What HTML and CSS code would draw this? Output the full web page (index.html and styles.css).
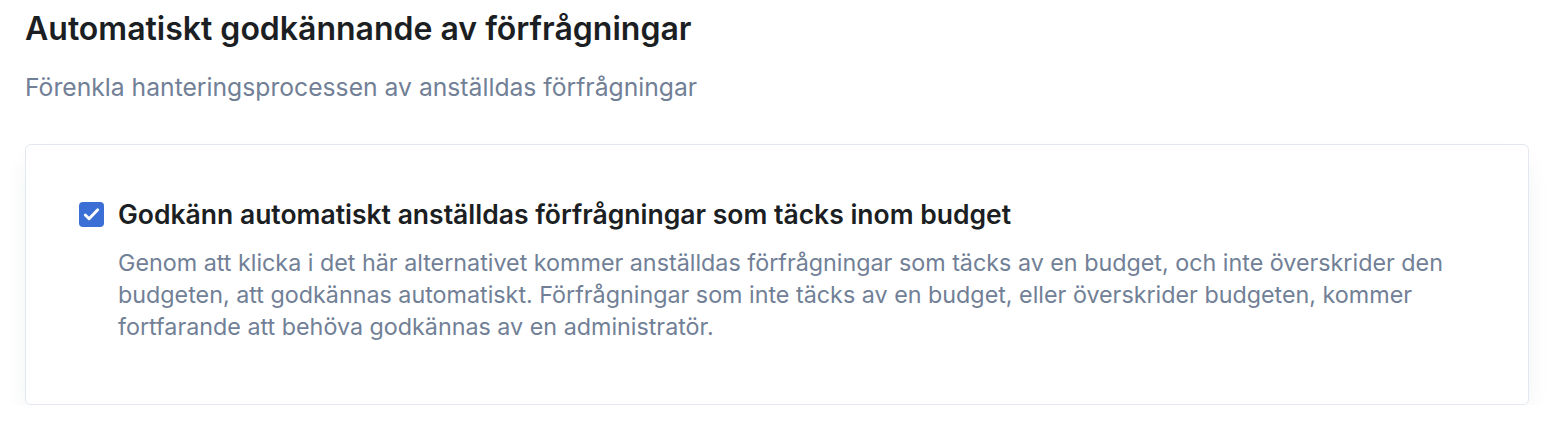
FILE: index.html
```html
<!DOCTYPE html>
<html lang="sv">
  <head>
    <meta charset="UTF-8" />
    <meta name="viewport" content="width=device-width, initial-scale=1.0" />
    <title>Automatiskt godkännande</title>
    <link rel="stylesheet" href="styles.css">
  </head>
  <body>
    <section class="settings">
      <h2 class="settings-title">Automatiskt godkännande av förfrågningar</h2>
      <p class="settings-subtitle">Förenkla hanteringsprocessen av anställdas förfrågningar</p>
      <div class="card">
        <label class="option">
          <span class="checkbox">
            <svg viewBox="0 0 24 24" width="23" height="23">
              <path d="M5.5 12.5l4 4 9-9.5" fill="none" stroke="#fff" stroke-width="3" stroke-linecap="round" stroke-linejoin="round" />
            </svg>
          </span>
          <span class="option-label">Godkänn automatiskt anställdas förfrågningar som täcks inom budget</span>
        </label>
        <p class="option-help">
          Genom att klicka i det här alternativet kommer anställdas förfrågningar som täcks av en budget, och inte överskrider den
          budgeten, att godkännas automatiskt. Förfrågningar som inte täcks av en budget, eller överskrider budgeten, kommer
          fortfarande att behöva godkännas av en administratör.
        </p>
      </div>
    </section>
  </body>
</html>
```

FILE: styles.css
```css
* {
  box-sizing: border-box;
  margin: 0;
  padding: 0;
}

body {
  font-family: Inter, "Noto Sans", sans-serif;
  background-color: #fff;
  color: #1a1d21;
}

.settings {
  padding: 9px 27px 0 25px;
}

.settings-title {
  font-size: 32px;
  font-weight: 600;
  line-height: 40px;
  color: #1b1e22;
}

.settings-subtitle {
  margin-top: 22px;
  font-size: 24.7px;
  line-height: 32px;
  color: #718096;
}

.card {
  margin-top: 41px;
  border: 1px solid #e3e8ee;
  border-radius: 6px;
  padding: 53px 53px 61px;
  box-shadow: 0 14px 26px -6px rgba(30, 50, 80, 0.09);
}

.option {
  display: flex;
  align-items: center;
  gap: 14px;
}

.checkbox {
  width: 25px;
  height: 25px;
  border-radius: 4px;
  background-color: #3b6fd6;
  display: flex;
  align-items: center;
  justify-content: center;
  flex-shrink: 0;
}

.option-label {
  font-size: 26.5px;
  font-weight: 600;
  line-height: 32px;
  color: #1b1e22;
}

.option-help {
  margin-top: 17px;
  margin-left: 39px;
  font-size: 23.3px;
  line-height: 32px;
  color: #718096;
}
```
